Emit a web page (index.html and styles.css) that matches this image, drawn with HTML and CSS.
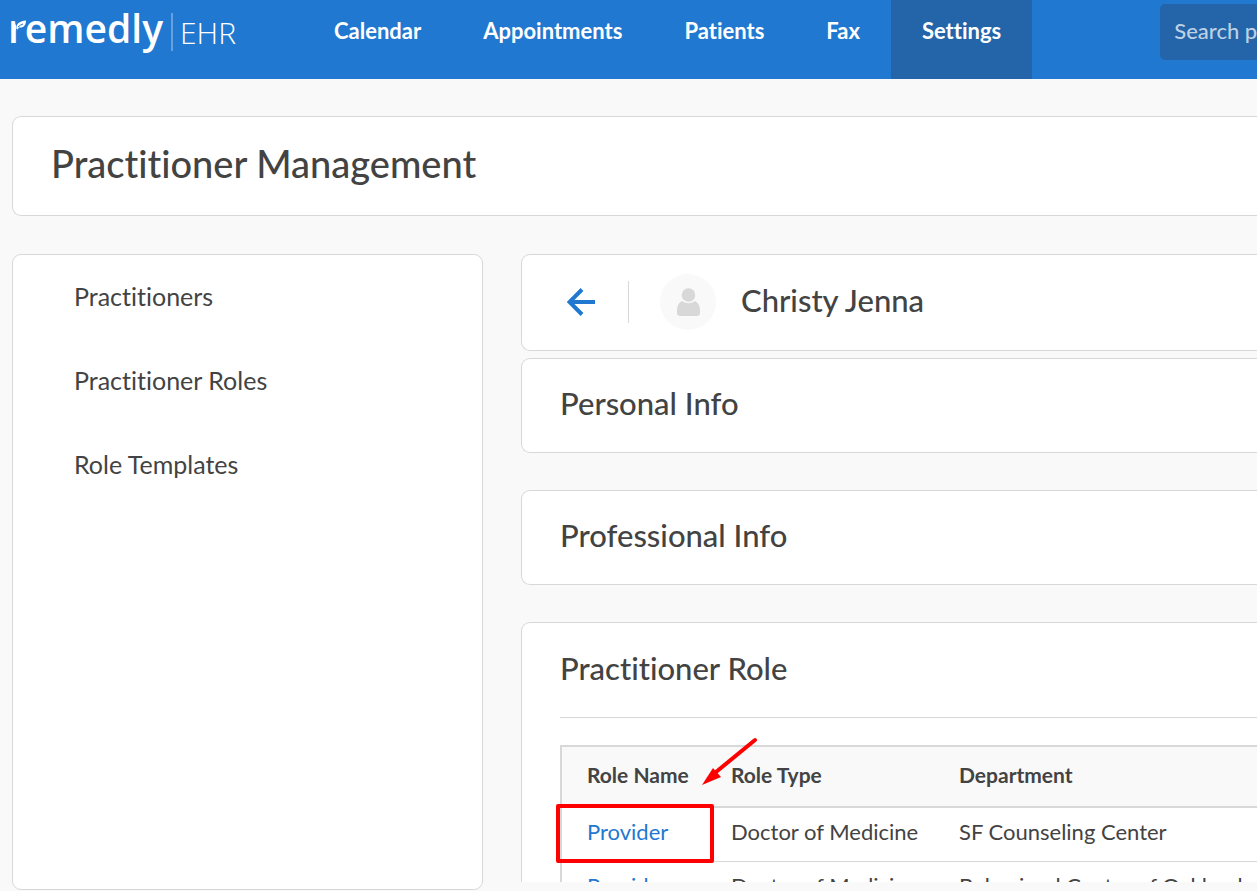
FILE: index.html
```
<!DOCTYPE html>
<html lang="en">
<head>
    <meta charset="UTF-8">
    <meta name="viewport" content="width=device-width, initial-scale=1.0">
    <title>Practitioner Management</title>
    <link rel="stylesheet" href="styles.css">
</head>
<body>
    <header class="topbar">
        <a class="logo" href="#">
            <span class="logo-name">remedly</span>
            <svg class="logo-leaf" viewBox="0 0 12 10" width="12" height="10">
                <path class="leaf-gap" d="M0 0h10.500v10H0z"/>
                <path class="leaf" d="M0.500 9C-0.500 4.500 3 1 10 0.500C10 5 8 8 3 7.500L1.500 9.500z"/>
                <path class="leaf-vein" d="M2 7Q4 5 7 4"/>
            </svg>
            <span class="logo-ehr">EHR</span>
        </a>
        <nav class="nav">
            <a href="#">Calendar</a>
            <a href="#">Appointments</a>
            <a href="#">Patients</a>
            <a href="#">Fax</a>
            <a href="#" class="active">Settings</a>
        </nav>
        <input class="search" type="text" placeholder="Search patients" aria-label="Search patients">
    </header>

    <main class="page">
        <div class="card title-card">
            <h1>Practitioner Management</h1>
        </div>

        <div class="columns">
            <aside class="sidebar">
                <a href="#">Practitioners</a>
                <a href="#">Practitioner Roles</a>
                <a href="#">Role Templates</a>
            </aside>

            <div class="content">
                <div class="card person">
                    <button class="back" type="button" aria-label="Back">
                        <svg viewBox="0 0 28 28" width="28" height="28">
                            <path d="M28 14H3M15 1.500L2.500 14L15 26.500"/>
                        </svg>
                    </button>
                    <div class="avatar">
                        <svg viewBox="0 0 24 28" width="24" height="28">
                            <circle cx="12.500" cy="7" r="6.800"/>
                            <path d="M6 13Q12.500 17.500 19 13Q24 15.500 24 23V25Q24 28 21 28H4Q1 28 1 25V23Q1 15.500 6 13z"/>
                        </svg>
                    </div>
                    <h2>Christy Jenna</h2>
                </div>

                <section class="card info">
                    <h2>Personal Info</h2>
                </section>

                <section class="card info">
                    <h2>Professional Info</h2>
                </section>

                <section class="card roles">
                    <h2>Practitioner Role</h2>
                    <div class="table-wrap">
                        <table>
                            <thead>
                                <tr>
                                    <th class="col-name">Role Name</th>
                                    <th class="col-type">Role Type</th>
                                    <th>Department</th>
                                </tr>
                            </thead>
                            <tbody>
                                <tr>
                                    <td><a href="#">Provider</a></td>
                                    <td>Doctor of Medicine</td>
                                    <td>SF Counseling Center</td>
                                </tr>
                                <tr>
                                    <td><a href="#">Provider</a></td>
                                    <td>Doctor of Medicine</td>
                                    <td>Behavioral Center of Oakland</td>
                                </tr>
                            </tbody>
                        </table>
                        <div class="highlight"></div>
                        <svg class="arrow" viewBox="0 0 60 50" width="60" height="50">
                            <path class="arrow-line" d="M55 4L16 36"/>
                            <path class="arrow-head" d="M2 49L13 32L21 41z"/>
                        </svg>
                    </div>
                </section>
            </div>
        </div>
    </main>
</body>
</html>
```
FILE: styles.css
```
* {
    box-sizing: border-box;
}

body {
    margin: 0;
    height: 100vh;
    display: flex;
    flex-direction: column;
    overflow: hidden;
    background: #f9f9f9;
    color: #434343;
    font-family: 'Lato', sans-serif;
    font-variant-ligatures: none;
}

a {
    color: inherit;
    text-decoration: none;
}

h1, h2 {
    margin: 0;
    font-weight: 500;
}

h1 {
    font-size: 38px;
    line-height: 48px;
}

h2 {
    font-size: 31px;
    line-height: 40px;
}

/* top bar */
.topbar {
    display: flex;
    flex: none;
    height: 79px;
    background: #2178d0;
    color: white;
}

.logo {
    position: relative;
    display: flex;
    flex: none;
    width: 303px;
    padding-left: 8px;
    font-family: 'Open Sans', sans-serif;
    line-height: 56px;
}

.logo-name {
    font-size: 39px;
    font-weight: 600;
}

.logo-leaf {
    position: absolute;
    left: 16px;
    top: 20px;
}

.leaf-gap {
    fill: #2178d0;
}

.leaf {
    fill: white;
}

.leaf-vein {
    fill: none;
    stroke: #2178d0;
    stroke-width: 1;
}

.logo-ehr {
    height: 38px;
    margin-top: 13px;
    margin-left: 8px;
    padding-left: 7px;
    border-left: 2px solid #64a1de;
    font-size: 30px;
    font-weight: 300;
    line-height: 40px;
}

.nav {
    display: flex;
}

.nav a {
    padding: 16px 31px;
    font-size: 22px;
    font-weight: 700;
    line-height: 30px;
}

.nav .active {
    background: #2464a9;
}

.search {
    flex: 1;
    min-width: 0;
    height: 56px;
    margin: 4px 0 0 128px;
    padding: 0 0 3px 14px;
    border: none;
    border-radius: 5px 0 0 5px;
    background: #2464a9;
    color: white;
    font-family: inherit;
    font-size: 22px;
    font-weight: 500;
}

.search::placeholder {
    color: #bdd1e5;
    opacity: 1;
}

/* page */
.page {
    display: flex;
    flex: 1;
    flex-direction: column;
    gap: 38px;
    min-height: 0;
    padding: 37px 0 0 12px;
}

.card {
    flex: none;
    border: 1px solid #d8d8d8;
    border-right: none;
    border-radius: 9px 0 0 9px;
    background: white;
}

.title-card {
    padding: 22px 38px 28px;
}

.columns {
    display: flex;
    flex: 1;
    gap: 38px;
    min-height: 0;
}

.sidebar {
    display: flex;
    flex: none;
    flex-direction: column;
    gap: 52px;
    width: 471px;
    margin-bottom: 1px;
    padding: 25px 61px;
    border: 1px solid #d8d8d8;
    border-radius: 9px;
    background: white;
    font-size: 25px;
    line-height: 32px;
}

.content {
    display: flex;
    flex: 1;
    flex-direction: column;
    min-width: 0;
    margin-bottom: 9px;
    overflow: hidden;
}

.person {
    display: flex;
    align-items: center;
    height: 97px;
    margin-bottom: 7px;
    padding: 0 0 2px 45px;
}

.person h2 {
    padding-bottom: 4px;
}

.back {
    display: flex;
    align-items: center;
    height: 42px;
    padding: 0 33px 0 0;
    border: none;
    border-right: 1px solid #d8d8d8;
    background: none;
    cursor: pointer;
}

.back path {
    fill: none;
    stroke: #2178d0;
    stroke-width: 4;
}

.avatar {
    display: flex;
    align-items: center;
    justify-content: center;
    width: 56px;
    height: 56px;
    margin: 0 25px 0 31px;
    border-radius: 50%;
    background: #f9f9f9;
    fill: #d8d8d8;
}

.info {
    margin-bottom: 37px;
    padding: 24px 38px 29px;
}

.roles {
    padding: 25px 0 28px 38px;
}

.table-wrap {
    position: relative;
    margin-top: 29px;
    padding-top: 27px;
    border-top: 1px solid #d8d8d8;
}

table {
    width: 100%;
    border: 2px solid #d8d8d8;
    border-right: none;
    border-collapse: separate;
    border-spacing: 0;
    table-layout: fixed;
    font-size: 22px;
    line-height: 28px;
}

th, td {
    padding: 10px 0 15px 25px;
    border-bottom: 1px solid #d8d8d8;
    text-align: left;
    white-space: nowrap;
}

th {
    padding: 14px 0 17px 25px;
    border-bottom-width: 2px;
    background: #f9f9f9;
    font-size: 21px;
    font-weight: 700;
}

td a {
    color: #2178d0;
}

.col-name {
    width: 144px;
}

.col-type {
    width: 228px;
}

/* marks over the table */
.highlight {
    position: absolute;
    left: -4px;
    top: 86px;
    width: 158px;
    height: 59px;
    border: 4px solid red;
    border-radius: 2px;
}

.arrow {
    position: absolute;
    left: 140px;
    top: 18px;
}

.arrow-line {
    stroke: red;
    stroke-width: 4;
    stroke-linecap: round;
}

.arrow-head {
    fill: red;
}
```
